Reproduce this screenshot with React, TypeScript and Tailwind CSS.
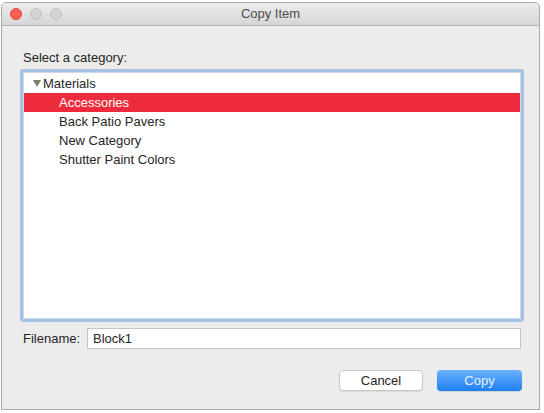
import { useState } from 'react';

const children = ['Accessories', 'Back Patio Pavers', 'New Category', 'Shutter Paint Colors'];

export default function App() {
  const [selected, setSelected] = useState('Accessories');
  const [filename, setFilename] = useState('Block1');

  return (
    <div className="w-[544px] h-[413px] bg-white pl-px pt-[2px] font-['Liberation_Sans',Arial,sans-serif] text-[13px] text-[#262626]">
      <div className="w-[539px] h-[408px] flex flex-col border border-[#a9a9a9] rounded-t-[5px] overflow-hidden bg-[#ececec]">
        {/* title bar */}
        <div className="relative h-[23px] shrink-0 flex items-center justify-center bg-gradient-to-b from-[#ececec] to-[#d6d6d6] border-b border-[#b5b5b5]">
          <div className="absolute left-[8px] top-[5px] flex gap-[8px]">
            <span className="w-[12px] h-[12px] rounded-full bg-[#fc5f57] border border-[#e0443e]" />
            <span className="w-[12px] h-[12px] rounded-full bg-[#d3d3d3] border border-[#c1c1c1]" />
            <span className="w-[12px] h-[12px] rounded-full bg-[#d3d3d3] border border-[#c1c1c1]" />
          </div>
          <span className="text-[#4d4d4d] text-[13px]">Copy Item</span>
        </div>

        {/* body */}
        <div className="flex-1 flex flex-col pl-[18px] pr-[15px] pt-[24px]">
          <div className="h-[16px] leading-[16px] pl-[3px]">Select a category:</div>

          <div className="mt-[3px] h-[253px] rounded-[3px] border-[3px] border-[#a7c1e3] p-px bg-[#c9d8ec]">
            <div className="h-full bg-white pt-px">
              <div className="h-[19px] flex items-center pl-[9px]">
                <svg width="8" height="7" viewBox="0 0 8 7" className="mr-[2px]">
                  <path d="M0 0 H8 L4 7 Z" fill="#7a7a7a" />
                </svg>
                <span>Materials</span>
              </div>
              {children.map((name) => (
                <div
                  key={name}
                  onClick={() => setSelected(name)}
                  className={
                    name === selected
                      ? 'h-[19px] flex items-center pl-[35px] bg-[#ee2b3c] text-white'
                      : 'h-[19px] flex items-center pl-[35px]'
                  }
                >
                  {name}
                </div>
              ))}
            </div>
          </div>

          <div className="mt-[6px] flex items-center pr-[3px]">
            <span className="w-[67px] pl-[3px] shrink-0">Filename:</span>
            <input
              value={filename}
              onChange={(e) => setFilename(e.target.value)}
              className="flex-1 h-[21px] border border-[#c5c5c5] bg-white px-[5px] text-[13px] outline-none"
            />
          </div>

          <div className="mt-[21px] flex justify-end gap-[14px] pr-[2px]">
            <button className="w-[84px] h-[21px] rounded-[4px] border border-[#c8c8c8] bg-white text-[#262626] shadow-[0_1px_1px_rgba(0,0,0,0.08)]">
              Cancel
            </button>
            <button className="w-[85px] h-[21px] rounded-[4px] bg-gradient-to-b from-[#69b1fa] to-[#1a7ff6] text-[#e8f1ff] shadow-[0_1px_1px_rgba(0,0,0,0.12)]">
              Copy
            </button>
          </div>
        </div>
      </div>
    </div>
  );
}
